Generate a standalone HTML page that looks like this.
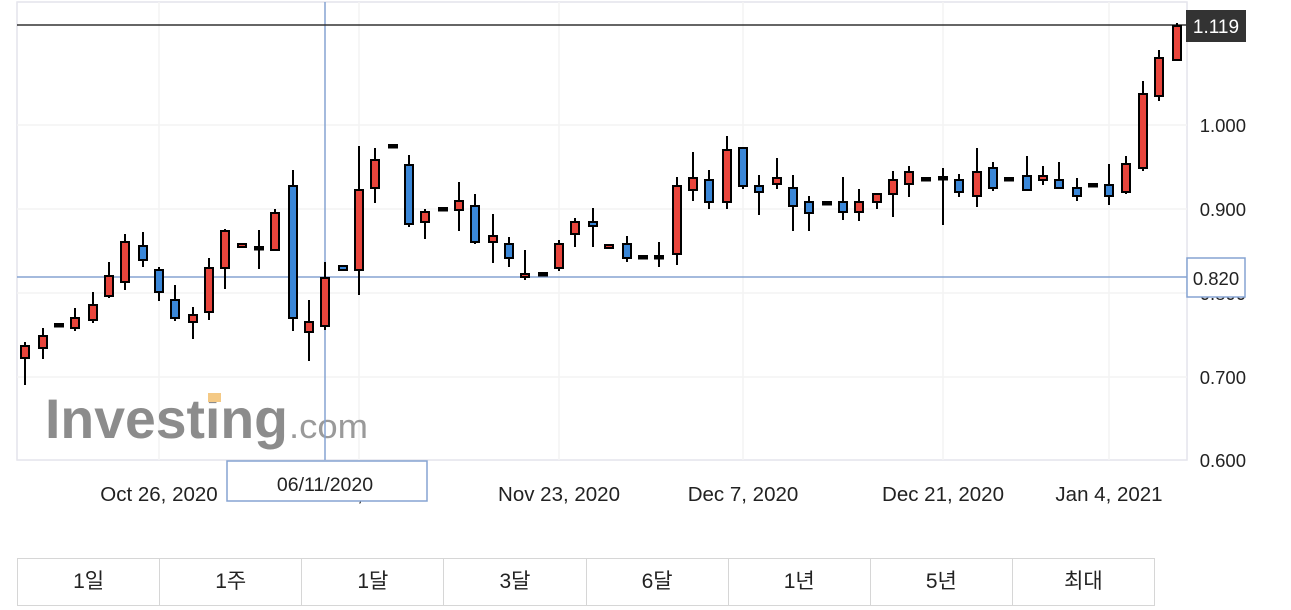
<!DOCTYPE html>
<html><head><meta charset="utf-8"><style>
html,body{margin:0;padding:0;background:#fff;width:1291px;height:610px;overflow:hidden;font-family:"Liberation Sans","Noto Sans CJK KR",sans-serif}
svg{position:absolute;left:0;top:0}
.btns{position:absolute;left:17px;top:558px;width:1138px;height:48px;border:1.5px solid #d6d6d6;display:flex;box-sizing:border-box}
.btns div{flex:1;border-right:1.5px solid #d6d6d6;text-align:center;line-height:45px;font-size:21px;color:#222}
.btns div:last-child{border-right:none}
</style></head><body>
<svg width="1291" height="610" xmlns="http://www.w3.org/2000/svg" font-family="Liberation Sans, sans-serif">
<rect x="17" y="2" width="1170" height="458" fill="#fff" stroke="#e4e4ec" stroke-width="1.5"/>
<g stroke="#f3f3f3" stroke-width="1.5">
<line x1="17" y1="125" x2="1187" y2="125"/><line x1="17" y1="209" x2="1187" y2="209"/><line x1="17" y1="293" x2="1187" y2="293"/><line x1="17" y1="377" x2="1187" y2="377"/>
<line x1="159" y1="2" x2="159" y2="460"/><line x1="359" y1="2" x2="359" y2="460"/><line x1="559" y1="2" x2="559" y2="460"/><line x1="743" y1="2" x2="743" y2="460"/><line x1="943" y1="2" x2="943" y2="460"/><line x1="1109" y1="2" x2="1109" y2="460"/>
</g>
<text x="45" y="438" font-size="56" font-weight="bold" fill="#8c8c8c" textLength="243" lengthAdjust="spacingAndGlyphs">Investing</text>
<rect x="208" y="393" width="13" height="9" fill="#f4c985"/>
<text x="289" y="438" font-size="34" fill="#9a9a9a" textLength="79" lengthAdjust="spacingAndGlyphs">.com</text>
<line x1="325" y1="2" x2="325" y2="460" stroke="#85a3d2" stroke-width="1.5"/>
<line x1="17" y1="277" x2="1187" y2="277" stroke="#85a3d2" stroke-width="1.5"/>
<line x1="17" y1="25" x2="1187" y2="25" stroke="#333" stroke-width="1.5"/>
<g id="c" stroke="#000" stroke-width="2"></g>
<g font-size="18.5" fill="#222" text-anchor="end">
<text x="1246" y="132">1.000</text><text x="1246" y="216">0.900</text><text x="1246" y="300">0.800</text><text x="1246" y="384">0.700</text><text x="1246" y="467">0.600</text>
</g>
<rect x="1187" y="258" width="58" height="39" fill="#fff" stroke="#85a3d2" stroke-width="1.5"/>
<text x="1216" y="285" font-size="18.5" fill="#222" text-anchor="middle">0.820</text>
<rect x="1186" y="10" width="60" height="32" fill="#333"/>
<text x="1216" y="33" font-size="19" fill="#fff" text-anchor="middle">1.119</text>
<g font-size="20.5" fill="#222" text-anchor="middle">
<text x="159" y="501">Oct 26, 2020</text><text x="359" y="501">Nov 9, 2020</text><text x="559" y="501">Nov 23, 2020</text><text x="743" y="501">Dec 7, 2020</text><text x="943" y="501">Dec 21, 2020</text><text x="1109" y="501">Jan 4, 2021</text>
</g>
<rect x="227" y="461" width="200" height="40" fill="#fff" stroke="#85a3d2" stroke-width="1.5"/>
<text x="325" y="491" font-size="19.5" fill="#222" text-anchor="middle">06/11/2020</text>
</svg>
<div class="btns"><div>1일</div><div>1주</div><div>1달</div><div>3달</div><div>6달</div><div>1년</div><div>5년</div><div>최대</div></div>
<script>
var d=[[25,342,385,346,358,'r'],[43,328,359,336,348,'r'],[59,325,325,325,325,'k'],[75,308,331,318,328,'r'],[93,292,323,305,320,'r'],[109,262,298,276,296,'r'],[125,234,290,242,282,'r'],[143,232,267,246,260,'b'],[159,267,301,270,292,'b'],[175,285,321,300,318,'b'],[193,307,339,315,322,'r'],[209,258,320,268,312,'r'],[225,229,289,231,268,'r'],[242,244,247,244,247,'r'],[259,230,269,248,250,'k'],[275,209,250,213,250,'r'],[293,170,331,186,318,'b'],[309,300,361,322,332,'r'],[325,262,330,278,326,'r'],[343,266,270,266,270,'b'],[359,146,295,190,270,'r'],[375,148,203,160,188,'r'],[393,146,146,146,146,'k'],[409,155,227,165,224,'b'],[425,209,239,212,222,'r'],[443,209,209,209,209,'k'],[459,182,231,201,210,'r'],[475,194,244,206,242,'b'],[493,214,263,236,242,'r'],[509,237,267,244,258,'b'],[525,250,280,274,277,'r'],[543,274,274,274,274,'k'],[559,240,271,244,268,'r'],[575,218,247,222,234,'r'],[593,208,247,222,226,'b'],[609,245,248,245,248,'r'],[627,236,262,244,258,'b'],[643,257,257,257,257,'k'],[659,242,267,257,257,'k'],[677,177,265,186,254,'r'],[693,152,201,178,190,'r'],[709,170,209,180,202,'b'],[727,136,209,150,202,'r'],[743,148,189,148,186,'b'],[759,175,215,186,192,'b'],[777,158,189,178,184,'r'],[793,175,231,188,206,'b'],[809,196,231,202,213,'b'],[827,203,203,203,203,'k'],[843,177,220,202,212,'b'],[859,189,221,202,212,'r'],[877,193,209,194,202,'r'],[893,171,217,180,194,'r'],[909,166,197,172,184,'r'],[926,179,179,179,179,'k'],[943,168,225,178,178,'k'],[959,174,197,180,192,'b'],[977,148,207,172,196,'r'],[993,162,191,168,188,'b'],[1009,179,179,179,179,'k'],[1027,156,190,176,190,'b'],[1043,166,185,176,180,'r'],[1059,162,189,180,188,'b'],[1077,178,201,188,196,'b'],[1093,185,185,185,185,'k'],[1109,164,205,185,196,'b'],[1126,156,194,164,192,'r'],[1143,81,171,94,168,'r'],[1159,50,101,58,96,'r'],[1177,23,61,26,60,'r']];
var g=document.getElementById('c'),s='';
d.forEach(function(c){var x=c[0];
s+='<line x1="'+x+'" y1="'+c[1]+'" x2="'+x+'" y2="'+c[2]+'"/>';
var h=Math.max(c[4]-c[3],2);
if(c[5]=='k'){s+='<rect x="'+(x-4)+'" y="'+(c[3]-1)+'" width="8" height="2.5" fill="#000"/>';}
else s+='<rect x="'+(x-4)+'" y="'+c[3]+'" width="8" height="'+h+'" fill="'+(c[5]=='r'?'#e8453c':'#3a87d8')+'"/>';});
g.innerHTML=s;
</script>
</body></html>
